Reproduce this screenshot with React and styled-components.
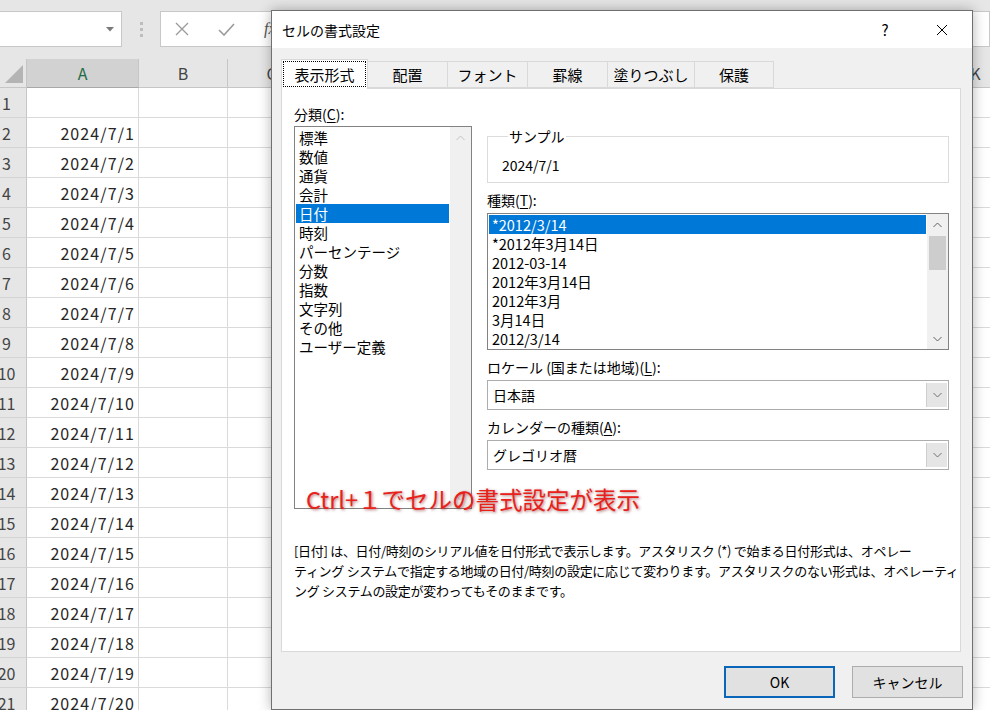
import React from "react"
import styled, { createGlobalStyle } from "styled-components"

const GlobalStyle = createGlobalStyle`
  *, *::before, *::after { box-sizing: border-box; }
  html, body { margin: 0; padding: 0; }
  body {
    width: 990px;
    height: 710px;
    overflow: hidden;
    background: #fff;
    font-family: "Noto Sans CJK JP", "Noto Sans", sans-serif;
    color: #000;
  }
`

const Screen = styled.div`
  position: relative;
  width: 990px;
  height: 710px;
  overflow: hidden;
  background: #fff;
`

// ---------- excel background ----------

const FormulaBar = styled.div`
  height: 59px;
  background: #e6e6e6;
  display: flex;
  align-items: flex-start;
  padding-top: 11px;
`

const NameBox = styled.div`
  width: 123px;
  height: 36px;
  margin-left: -1px;
  background: #fff;
  border: 1px solid #c8c8c8;
  display: flex;
  align-items: center;
  justify-content: flex-end;
  padding-right: 7px;
`

const Grip = styled.div`
  width: 38px;
  height: 36px;
  display: flex;
  align-items: center;
  justify-content: center;
`

const FormulaBox = styled.div`
  flex: 1;
  height: 36px;
  background: #fff;
  border: 1px solid #c8c8c8;
  display: flex;
  align-items: center;
  gap: 29px;
  padding-left: 14px;
  font-family: "Liberation Serif", serif;
  font-style: italic;
  font-size: 16px;
  color: #555;
`

const Sheet = styled.div`
  display: grid;
  grid-template-columns: 27px 112px 89px repeat(9, 88px);
  grid-template-rows: 29px;
  grid-auto-rows: 30px;
  font-size: 16px;
  color: #262626;
`

const Corner = styled.div`
  background: #e6e6e6;
  border-right: 1px solid #c6c6c6;
  border-bottom: 1px solid #c6c6c6;
  display: flex;
  align-items: flex-end;
  justify-content: flex-end;
  padding: 0 3px 4px 0;
`

const ColHead = styled.div`
  background: ${({ $selected }) => ($selected ? "#d2d2d2" : "#e6e6e6")};
  color: ${({ $selected }) => ($selected ? "#1e6b41" : "#444")};
  border-right: 1px solid #c6c6c6;
  border-bottom: 1px solid ${({ $selected }) => ($selected ? "#a8a8a8" : "#c6c6c6")};
  display: flex;
  align-items: center;
  justify-content: center;
`

const RowHead = styled.div`
  background: #e6e6e6;
  color: #444;
  border-right: 1px solid #c6c6c6;
  border-bottom: 1px solid #d4d4d4;
  display: flex;
  align-items: center;
  justify-content: center;
  padding-right: 13px;
  white-space: nowrap;
`

const Cell = styled.div`
  border-right: 1px solid #dadada;
  border-bottom: 1px solid #dadada;
  display: flex;
  align-items: center;
  justify-content: flex-end;
  padding-right: 3px;
  letter-spacing: 1.1px;
  white-space: nowrap;
`

// ---------- dialog ----------

const Dialog = styled.div`
  position: absolute;
  left: 271px;
  top: 10px;
  width: 702px;
  height: 700px;
  border: 1px solid #707070;
  background: #f0f0f0;
  box-shadow: 0 0 12px rgba(0, 0, 0, 0.3);
  display: flex;
  flex-direction: column;
  font-size: 14px;
`

const TitleBar = styled.div`
  height: 37px;
  background: #fff;
  display: flex;
  align-items: center;
  padding-left: 10px;
`

const Title = styled.div`
  flex: 1;
  font-size: 14px;
`

const TitleButton = styled.div`
  width: 46px;
  height: 37px;
  display: flex;
  align-items: center;
  justify-content: center;
  font-size: 15px;
  margin-right: ${({ $last }) => ($last ? "7px" : "11px")};
`

const Body = styled.div`
  flex: 1;
  display: flex;
  flex-direction: column;
  padding: 11px 11px 0 9px;
`

const TabRow = styled.div`
  display: flex;
  align-items: flex-end;
  height: 29px;
  padding-left: 1px;
  position: relative;
  z-index: 1;
`

const Tab = styled.div`
  width: ${({ $w }) => $w}px;
  height: ${({ $active }) => ($active ? "30px" : "27px")};
  margin-bottom: ${({ $active }) => ($active ? "-1px" : "0")};
  background: ${({ $active }) => ($active ? "#fff" : "#f0f0f0")};
  border: 1px solid #d9d9d9;
  border-bottom: ${({ $active }) => ($active ? "none" : "1px solid #d9d9d9")};
  margin-left: -1px;
  display: flex;
  align-items: stretch;
  justify-content: center;
  font-size: 15px;
  white-space: nowrap;
  padding: ${({ $active }) => ($active ? "2px 2px 3px" : "0")};
`

const TabLabel = styled.span`
  flex: 1;
  display: flex;
  align-items: center;
  justify-content: center;
  outline: ${({ $focus }) => ($focus ? "1px dotted #000" : "none")};
`

const Panel = styled.div`
  position: relative;
  height: 564px;
  background: #fff;
  border: 1px solid #d9d9d9;
  padding: 13px 0 0 12px;
  display: flex;
  flex-direction: column;
`

const Upper = styled.div`
  display: flex;
  gap: 15px;
`

const Column = styled.div`
  display: flex;
  flex-direction: column;
  width: ${({ $w }) => $w}px;
`

const FieldLabel = styled.div`
  height: 24px;
  line-height: 24px;
  font-size: 14px;
  margin-top: ${({ $mt }) => $mt || 0}px;
  white-space: nowrap;

  u {
    text-underline-offset: 2px;
  }
`

const ListBox = styled.div`
  height: ${({ $h }) => $h}px;
  border: 1px solid #828282;
  background: #fff;
  display: flex;
  margin-top: ${({ $mt }) => $mt || 0}px;
`

const ListItems = styled.div`
  flex: 1;
  padding-top: 1px;
  overflow: hidden;
`

const ListItem = styled.div`
  height: 19px;
  line-height: 19px;
  margin: 0 1px;
  padding-left: ${({ $pad }) => $pad}px;
  font-size: ${({ $fs }) => $fs}px;
  background: ${({ $selected }) => ($selected ? "#0078d7" : "transparent")};
  color: ${({ $selected }) => ($selected ? "#fff" : "#000")};
  white-space: nowrap;
`

const ScrollBar = styled.div`
  width: 21px;
  background: #f0f0f0;
  display: flex;
  flex-direction: column;
  align-items: center;
`

const ScrollArrow = styled.div`
  height: 21px;
  width: 100%;
  display: flex;
  align-items: center;
  justify-content: center;
`

const ScrollTrack = styled.div`
  flex: 1;
  width: 100%;
  padding: 1px 2px;
`

const Thumb = styled.div`
  height: 34px;
  background: #cdcdcd;
`

const SampleBox = styled.fieldset`
  margin: 25px 0 0;
  padding: 10px 14px 7px;
  border: 1px solid #dcdcdc;
  min-width: 0;

  legend {
    padding: 0 1px;
    margin-left: 6px;
    font-size: 14px;
    line-height: 18px;
  }
`

const SampleValue = styled.div`
  font-size: 14px;
  line-height: 20px;
`

const Combo = styled.div`
  height: 30px;
  margin-top: 1px;
  border: 1px solid #adadad;
  background: #fff;
  display: flex;
  align-items: center;
  padding: 2px 1px 2px 5px;
  font-size: 14px;
`

const ComboText = styled.div`
  flex: 1;
`

const ComboButton = styled.div`
  width: 21px;
  height: 100%;
  background: #e5e5e5;
  border-left: 1px solid #cfcfcf;
  display: flex;
  align-items: center;
  justify-content: center;
`

const Annotation = styled.div`
  position: absolute;
  left: 24px;
  top: 393px;
  font-size: 23.5px;
  line-height: 34px;
  color: #e8221b;
  white-space: nowrap;
  text-shadow: 1px 1px 3px rgba(110, 0, 0, 0.55);
`

const Description = styled.div`
  margin-top: 32px;
  font-size: 13px;
  line-height: 20px;
  letter-spacing: -0.3px;
  white-space: nowrap;
`

const ButtonRow = styled.div`
  display: flex;
  justify-content: flex-end;
  gap: 17px;
  margin-top: 14px;
  margin-right: -2px;
`

const Button = styled.div`
  width: 111px;
  height: 32px;
  background: #e1e1e1;
  border: ${({ $default }) => ($default ? "2px solid #0a66b8" : "1px solid #adadad")};
  display: flex;
  align-items: center;
  justify-content: center;
  font-size: 14px;
`

// ---------- small drawings ----------

const Chevron = ({ dir = "up", color = "#606060" }) => (
  <svg width="9" height="6" viewBox="0 0 9 6">
    <polyline
      points={dir === "up" ? "0.5,5 4.5,1 8.5,5" : "0.5,1 4.5,5 8.5,1"}
      fill="none"
      stroke={color}
      strokeWidth="1"
    />
  </svg>
)

const CloseIcon = () => (
  <svg width="12" height="12" viewBox="0 0 12 12">
    <path d="M1 1 L11 11 M11 1 L1 11" stroke="#000" strokeWidth="1" />
  </svg>
)

const categories = [
  "標準", "数値", "通貨", "会計", "日付", "時刻", "パーセンテージ",
  "分数", "指数", "文字列", "その他", "ユーザー定義",
]

const types = [
  "*2012/3/14", "*2012年3月14日", "2012-03-14", "2012年3月14日",
  "2012年3月", "3月14日", "2012/3/14",
]

const tabs = [
  { label: "表示形式", w: 87, active: true },
  { label: "配置", w: 81 },
  { label: "フォント", w: 81 },
  { label: "罫線", w: 81 },
  { label: "塗りつぶし", w: 88 },
  { label: "保護", w: 80 },
]

const columns = ["A", "B", "C", "D", "E", "F", "G", "H", "I", "J", "K"]

function ExcelSheet() {
  const rows = Array.from({ length: 21 }, (_, i) => i + 1)
  return (
    <>
      <FormulaBar>
        <NameBox>
          <svg width="8" height="5" viewBox="0 0 8 5">
            <path d="M0 0 L8 0 L4 4.5 Z" fill="#7a7a7a" />
          </svg>
        </NameBox>
        <Grip>
          <svg width="3" height="15" viewBox="0 0 3 15">
            <rect x="0" y="0" width="3" height="3" fill="#bdbdbd" />
            <rect x="0" y="6" width="3" height="3" fill="#bdbdbd" />
            <rect x="0" y="12" width="3" height="3" fill="#bdbdbd" />
          </svg>
        </Grip>
        <FormulaBox>
          <svg width="14" height="14" viewBox="0 0 14 14">
            <path d="M1 1 L13 13 M13 1 L1 13" stroke="#9a9a9a" strokeWidth="1.3" />
          </svg>
          <svg width="17" height="13" viewBox="0 0 17 13">
            <path d="M1 7 L6 12 L16 1" stroke="#9a9a9a" strokeWidth="1.6" fill="none" />
          </svg>
          <span>fx</span>
        </FormulaBox>
      </FormulaBar>
      <Sheet>
        <Corner>
          <svg width="18" height="18" viewBox="0 0 18 18">
            <path d="M18 0 L18 18 L0 18 Z" fill="#b4b4b4" />
          </svg>
        </Corner>
        {columns.map((c) => (
          <ColHead key={c} $selected={c === "A"}>{c}</ColHead>
        ))}
        {rows.map((r) => (
          <React.Fragment key={r}>
            <RowHead>{r}</RowHead>
            {columns.map((c) => (
              <Cell key={c}>{c === "A" && r > 1 ? `2024/7/${r - 1}` : ""}</Cell>
            ))}
          </React.Fragment>
        ))}
      </Sheet>
    </>
  )
}

function FormatDialog() {
  return (
    <Dialog>
      <TitleBar>
        <Title>セルの書式設定</Title>
        <TitleButton>?</TitleButton>
        <TitleButton $last>
          <CloseIcon />
        </TitleButton>
      </TitleBar>
      <Body>
        <TabRow>
          {tabs.map((t) => (
            <Tab key={t.label} $w={t.w} $active={t.active}>
              <TabLabel $focus={t.active}>{t.label}</TabLabel>
            </Tab>
          ))}
        </TabRow>
        <Panel>
          <Upper>
            <Column $w={178}>
              <FieldLabel>
                分類(<u>C</u>):
              </FieldLabel>
              <ListBox $h={383}>
                <ListItems>
                  {categories.map((c) => (
                    <ListItem key={c} $pad={3} $fs={14.5} $selected={c === "日付"}>
                      {c}
                    </ListItem>
                  ))}
                </ListItems>
                <ScrollBar>
                  <ScrollArrow>
                    <Chevron dir="up" color="#c2c2c2" />
                  </ScrollArrow>
                  <ScrollTrack />
                  <ScrollArrow>
                    <Chevron dir="down" color="#c2c2c2" />
                  </ScrollArrow>
                </ScrollBar>
              </ListBox>
            </Column>
            <Column $w={462}>
              <SampleBox>
                <legend>サンプル</legend>
                <SampleValue>2024/7/1</SampleValue>
              </SampleBox>
              <FieldLabel $mt={5}>
                種類(<u>T</u>):
              </FieldLabel>
              <ListBox $h={137} $mt={1}>
                <ListItems>
                  {types.map((t, i) => (
                    <ListItem key={t + i} $pad={3} $fs={14.5} $selected={i === 0}>
                      {t}
                    </ListItem>
                  ))}
                </ListItems>
                <ScrollBar>
                  <ScrollArrow>
                    <Chevron dir="up" />
                  </ScrollArrow>
                  <ScrollTrack>
                    <Thumb />
                  </ScrollTrack>
                  <ScrollArrow>
                    <Chevron dir="down" />
                  </ScrollArrow>
                </ScrollBar>
              </ListBox>
              <FieldLabel $mt={5}>
                ロケール (国または地域)(<u>L</u>):
              </FieldLabel>
              <Combo>
                <ComboText>日本語</ComboText>
                <ComboButton>
                  <Chevron dir="down" color="#707070" />
                </ComboButton>
              </Combo>
              <FieldLabel $mt={5}>
                カレンダーの種類(<u>A</u>):
              </FieldLabel>
              <Combo>
                <ComboText>グレゴリオ暦</ComboText>
                <ComboButton>
                  <Chevron dir="down" color="#707070" />
                </ComboButton>
              </Combo>
            </Column>
          </Upper>
          <Description>
            [日付] は、日付/時刻のシリアル値を日付形式で表示します。アスタリスク (*) で始まる日付形式は、オペレー
            <br />
            ティング システムで指定する地域の日付/時刻の設定に応じて変わります。アスタリスクのない形式は、オペレーティ
            <br />
            ング システムの設定が変わってもそのままです。
          </Description>
          <Annotation>Ctrl+１でセルの書式設定が表示</Annotation>
        </Panel>
        <ButtonRow>
          <Button $default>OK</Button>
          <Button>キャンセル</Button>
        </ButtonRow>
      </Body>
    </Dialog>
  )
}

export default function App() {
  return (
    <Screen>
      <GlobalStyle />
      <ExcelSheet />
      <FormatDialog />
    </Screen>
  )
}
